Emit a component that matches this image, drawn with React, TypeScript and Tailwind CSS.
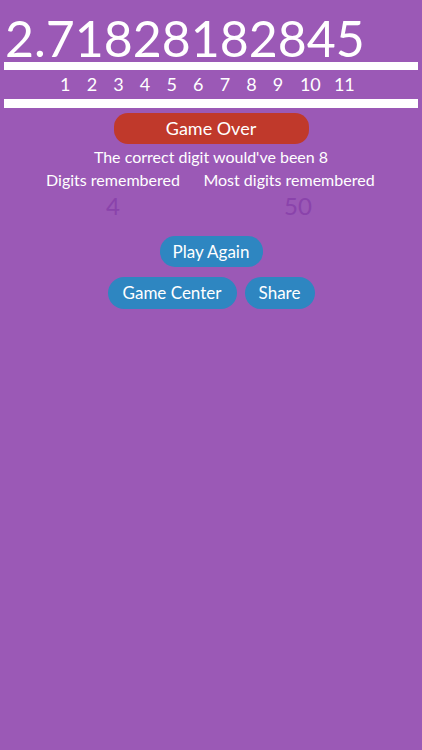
import React from "react";

const labels = ["1", "2", "3", "4", "5", "6", "7", "8", "9"];

const App: React.FC = () => {
  return (
    <div
      className="w-[422px] h-[750px] bg-[#9b59b6] text-white overflow-hidden"
      style={{ fontFamily: "Lato, 'Noto Sans', sans-serif" }}
    >
      {/* Digits entered so far */}
      <div className="pt-[15px] pl-[5px] text-[50px] leading-[47px]">
        2.71828182845
      </div>
      <div className="mx-[4px] h-[8px] bg-white"></div>

      {/* Position labels */}
      <div className="flex pl-[52px] text-[18px] leading-[29px]">
        {labels.map((l) => (
          <div key={l} className="w-[26.6px] text-center">
            {l}
          </div>
        ))}
        <div className="w-[38px] text-center">10</div>
        <div className="w-[30px] text-center">11</div>
      </div>
      <div className="mx-[4px] h-[9px] bg-white"></div>

      {/* Result */}
      <div className="mt-[5px] mx-auto w-[195px] h-[31px] rounded-[14px] bg-[#c0392b] flex items-center justify-center text-[18px]">
        Game Over
      </div>
      <div className="mt-[2px] text-center text-[16px] leading-[22px]">
        The correct digit would've been 8
      </div>

      <div className="mt-[1px] flex">
        <div className="ml-[40px] w-[146px] flex flex-col items-center">
          <div className="text-[16px] leading-[22px] whitespace-nowrap">Digits remembered</div>
          <div className="mt-[1px] text-[24px] leading-[28px] text-[#8a43ab]">4</div>
        </div>
        <div className="ml-[10px] w-[186px] flex flex-col items-center">
          <div className="text-[16px] leading-[22px] whitespace-nowrap">Most digits remembered</div>
          <div className="mt-[1px] pl-[18px] text-[24px] leading-[28px] text-[#8a43ab]">50</div>
        </div>
      </div>

      {/* Actions */}
      <div className="mt-[16px] flex justify-center">
        <button className="w-[103px] h-[31px] rounded-[15px] bg-[#2e86c1] text-[17px] flex items-center justify-center">
          Play Again
        </button>
      </div>
      <div className="mt-[10px] flex justify-center gap-[8px]">
        <button className="w-[129px] h-[32px] rounded-[16px] bg-[#2e86c1] text-[17px] flex items-center justify-center">
          Game Center
        </button>
        <button className="w-[70px] h-[32px] rounded-[16px] bg-[#2e86c1] text-[17px] flex items-center justify-center">
          Share
        </button>
      </div>
    </div>
  );
};

export default App;
